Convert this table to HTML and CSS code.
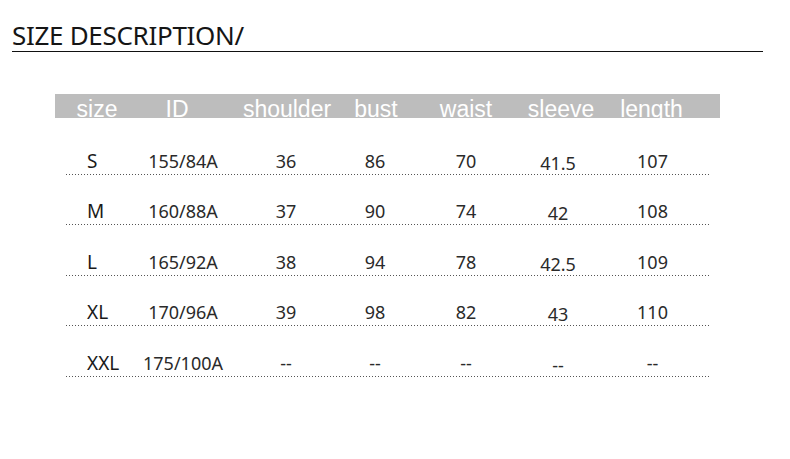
FILE: index.html
```html
<!DOCTYPE html>
<html>
<head>
<meta charset="utf-8">
<link rel="stylesheet" href="styles.css">
</head>
<body>
<div class="page">
  <h1 class="title">SIZE DESCRIPTION/</h1>
  <div class="table">
    <div class="head">
      <div class="hc"><span>size</span></div>
      <div class="hc"><span>ID</span></div>
      <div class="hc"><span>shoulder</span></div>
      <div class="hc"><span>bust</span></div>
      <div class="hc"><span>waist</span></div>
      <div class="hc"><span>sleeve</span></div>
      <div class="hc"><span>length</span></div>
    </div>
    <div class="rows">
      <div class="row">
        <div class="c size">S</div><div class="c">155/84A</div><div class="c">36</div><div class="c">86</div><div class="c">70</div><div class="c slv">41.5</div><div class="c">107</div>
      </div>
      <div class="row">
        <div class="c size">M</div><div class="c">160/88A</div><div class="c">37</div><div class="c">90</div><div class="c">74</div><div class="c slv">42</div><div class="c">108</div>
      </div>
      <div class="row">
        <div class="c size">L</div><div class="c">165/92A</div><div class="c">38</div><div class="c">94</div><div class="c">78</div><div class="c slv">42.5</div><div class="c">109</div>
      </div>
      <div class="row">
        <div class="c size">XL</div><div class="c">170/96A</div><div class="c">39</div><div class="c">98</div><div class="c">82</div><div class="c slv">43</div><div class="c">110</div>
      </div>
      <div class="row">
        <div class="c size">XXL</div><div class="c">175/100A</div><div class="c">--</div><div class="c">--</div><div class="c">--</div><div class="c slv">--</div><div class="c">--</div>
      </div>
    </div>
  </div>
</div>
</body>
</html>
```

FILE: styles.css
```css
html, body {
  margin: 0;
  padding: 0;
  background: #ffffff;
}

.page {
  width: 790px;
  height: 459px;
  overflow: hidden;
}

.title {
  margin: 0 0 0 12px;
  width: 751px;
  padding-top: 20px;
  padding-bottom: 1px;
  font-family: "Noto Sans", sans-serif;
  font-weight: 400;
  font-size: 26px;
  line-height: 30px;
  color: #151515;
  border-bottom: 1px solid #111;
  letter-spacing: -0.3px;
}

.table {
  margin: 42px 0 0 55px;
  width: 665px;
}

.head {
  display: grid;
  grid-template-columns: 84px 76px 144px 34px 146px 44px 137px;
  height: 24px;
  box-sizing: border-box;
  padding-top: 3px;
  background: #bdbdbd;
  overflow: hidden;
}

.hc {
  display: flex;
  justify-content: center;
  font-family: "Liberation Sans", Arial, sans-serif;
  font-size: 23px;
  line-height: 24px;
  color: #ffffff;
  white-space: nowrap;
}

.rows {
  margin: 0 11px;
  display: grid;
  grid-auto-rows: 50.5px;
  padding-top: 6px;
}

.row {
  position: relative;
  display: grid;
  grid-template-columns: 66px 102px 104px 74px 108px 76px 113px;
  align-items: end;
  padding-bottom: 2px;
}

.row::after {
  content: "";
  position: absolute;
  left: 0;
  right: 0;
  bottom: 0;
  height: 1px;
  background: repeating-linear-gradient(to right, #555 0 1px, transparent 1px 3px);
}

.c {
  display: flex;
  justify-content: center;
  font-family: "Noto Sans", sans-serif;
  font-size: 18px;
  line-height: 24px;
  color: #2a2a2a;
  white-space: nowrap;
}

.c.size {
  justify-content: flex-start;
  padding-left: 21px;
  font-size: 19px;
  color: #1a1a1a;
}

.c.slv {
  position: relative;
  top: 2px;
}
```
